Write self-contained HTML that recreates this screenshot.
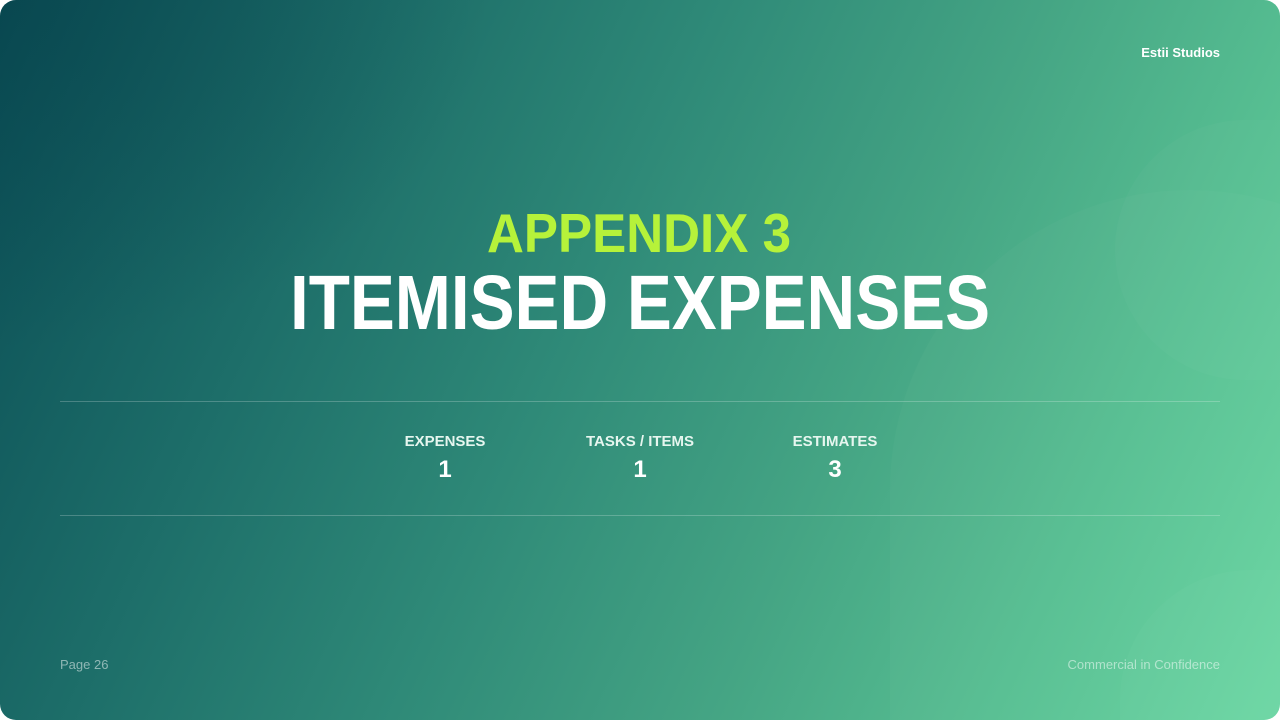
<!DOCTYPE html>
<html><head><meta charset="utf-8"><style>
html,body{margin:0;padding:0;background:#fff;width:1280px;height:720px;overflow:hidden;}
.s{position:relative;width:1280px;height:720px;border-radius:16px;overflow:hidden;
background:linear-gradient(115deg,#0a4d55 0%,#1d6e69 25%,#2f8a78 45%,#45a584 65%,#57bf92 82%,#6ad6a2 100%);
font-family:"Liberation Sans",sans-serif;}
.ov{position:absolute;left:0;top:0;width:1280px;height:720px;background:radial-gradient(ellipse 700px 500px at 0% 0%,rgba(5,60,70,0.35),transparent 70%);}
.blob{position:absolute;border-radius:50%;background:rgba(255,255,255,0.025);}
.line{position:absolute;left:60px;width:1160px;height:1px;background:rgba(255,255,255,0.22);}
.t{position:absolute;color:#fff;}
.lab{position:absolute;width:200px;text-align:center;color:#e6f6ef;font-weight:bold;font-size:15px;}
.num{position:absolute;width:200px;text-align:center;color:#fff;font-weight:bold;font-size:24px;}
svg{display:block}
</style></head><body>
<div class="s">
<div class="ov"></div>
<div class="blob" style="left:890px;top:190px;width:600px;height:530px;border-radius:300px 300px 0 0;"></div>
<div class="blob" style="left:1115px;top:120px;width:165px;height:260px;border-radius:130px 0 0 130px;"></div>
<div class="blob" style="left:1120px;top:570px;width:160px;height:150px;border-radius:130px 0 0 0;"></div>
<div class="t" style="right:60px;top:45px;font-size:13px;font-weight:bold;">Estii Studios</div>
<svg style="position:absolute;left:0;top:0" width="1280" height="720">
<text x="487" y="252" textLength="304" lengthAdjust="spacingAndGlyphs" font-family="Liberation Sans" font-weight="bold" font-size="55" fill="#b6f23a">APPENDIX 3</text>
<text x="290" y="329" textLength="700" lengthAdjust="spacingAndGlyphs" font-family="Liberation Sans" font-weight="bold" font-size="77" fill="#ffffff">ITEMISED EXPENSES</text>
</svg>
<div class="line" style="top:401px"></div>
<div class="line" style="top:515px"></div>
<div class="lab" style="left:345px;top:433px">EXPENSES</div>
<div class="lab" style="left:540px;top:433px">TASKS / ITEMS</div>
<div class="lab" style="left:735px;top:433px">ESTIMATES</div>
<div class="num" style="left:345px;top:456px">1</div>
<div class="num" style="left:540px;top:456px">1</div>
<div class="num" style="left:735px;top:456px">3</div>
<div class="t" style="left:60px;top:657px;font-size:13px;color:rgba(255,255,255,0.5)">Page 26</div>
<div class="t" style="right:60px;top:657px;font-size:13px;color:rgba(255,255,255,0.5)">Commercial in Confidence</div>
</div>
</body></html>
